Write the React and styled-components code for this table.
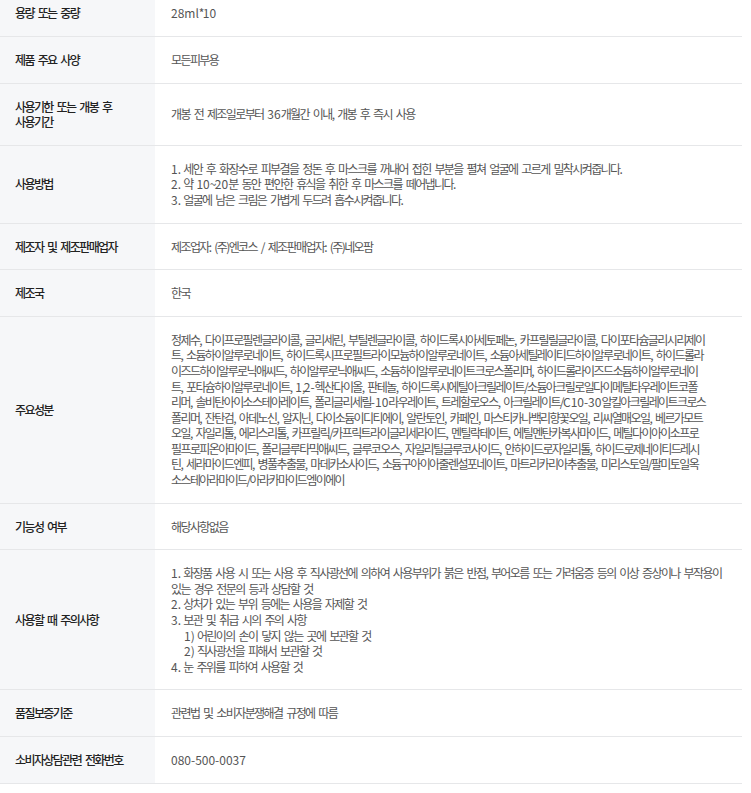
import styled, { createGlobalStyle } from 'styled-components'

const GlobalStyle = createGlobalStyle`
  body {
    margin: 0;
    background: #fff;
    font-family: "Noto Sans CJK KR", "Noto Sans", sans-serif;
  }
`

const Table = styled.div`
  width: 742px;
  font-size: 12px;
  line-height: 15.6px;
  letter-spacing: -1.6px;
  word-spacing: 2.7px;
`

const Row = styled.div`
  display: grid;
  grid-template-columns: 155px 1fr;
  border-bottom: 1px solid #e6e7e9;
`

const Label = styled.div`
  display: flex;
  align-items: center;
  background: #f6f7f9;
  padding: ${props => props.$first ? '5.4px' : '15px'} 15px 15px;
  color: #222;
  font-weight: 500;
`

const Value = styled.div`
  display: flex;
  flex-direction: column;
  justify-content: center;
  padding: ${props => props.$first ? '5.4px' : '15px'} 16px 15px;
  color: #555;
`

const Line = styled.div`
  white-space: nowrap;
  padding-left: ${props => props.$indent ? '13px' : '0'};
`

// latin letters, digits and hyphens keep their natural spacing
const Latin = styled.span`
  letter-spacing: 0;
`

function renderText(str) {
  return str.split(/([A-Za-z0-9-]+)/).map((part, i) =>
    /^[A-Za-z0-9-]+$/.test(part) ? <Latin key={i}>{part}</Latin> : part
  )
}

const usage = [
  '1. 세안 후 화장수로 피부결을 정돈 후 마스크를 꺼내어 접힌 부분을 펼쳐 얼굴에 고르게 밀착시켜줍니다.',
  '2. 약 10~20분 동안 편안한 휴식을 취한 후 마스크를 떼어냅니다.',
  '3. 얼굴에 남은 크림은 가볍게 두드려 흡수시켜줍니다.',
]

const ingredients = [
  '정제수, 다이프로필렌글라이콜, 글리세린, 부틸렌글라이콜, 하이드록시아세토페논, 카프릴릴글라이콜, 다이포타슘글리시리제이',
  '트, 소듐하이알루로네이트, 하이드록시프로필트라이모늄하이알루로네이트, 소듐아세틸레이티드하이알루로네이트, 하이드롤라',
  '이즈드하이알루로닉애씨드, 하이알루로닉애씨드, 소듐하이알루로네이트크로스폴리머, 하이드롤라이즈드소듐하이알루로네이',
  '트, 포타슘하이알루로네이트, 1,2-헥산다이올, 판테놀, 하이드록시에틸아크릴레이트/소듐아크릴로일다이메틸타우레이트코폴',
  '리머, 솔비탄아이소스테아레이트, 폴리글리세릴-10라우레이트, 트레할로오스, 아크릴레이트/C10-30알킬아크릴레이트크로스',
  '폴리머, 잔탄검, 아데노신, 알지닌, 다이소듐이디티에이, 알란토인, 카페인, 마스티카나백리향꽃오일, 리씨열매오일, 베르가모트',
  '오일, 자일리톨, 에리스리톨, 카프릴릭/카프릭트라이글리세라이드, 멘틸락테이트, 에틸멘탄카복사마이드, 메틸다이아이소프로',
  '필프로피온아마이드, 폴리글루타믹애씨드, 글루코오스, 자일리틸글루코사이드, 안하이드로자일리톨, 하이드로제네이티드레시',
  '틴, 세라마이드엔피, 병풀추출물, 마데카소사이드, 소듐구아이아줄렌설포네이트, 마트리카리아추출물, 미리스토일/팔미토일옥',
  '소스테아라마이드/아라카마이드엠이에이',
]

const cautions = [
  { text: '1. 화장품 사용 시 또는 사용 후 직사광선에 의하여 사용부위가 붉은 반점, 부어오름 또는 가려움증 등의 이상 증상이나 부작용이' },
  { text: '있는 경우 전문의 등과 상담할 것' },
  { text: '2. 상처가 있는 부위 등에는 사용을 자제할 것' },
  { text: '3. 보관 및 취급 시의 주의 사항' },
  { text: '1) 어린이의 손이 닿지 않는 곳에 보관할 것', indent: true },
  { text: '2) 직사광선을 피해서 보관할 것', indent: true },
  { text: '4. 눈 주위를 피하여 사용할 것' },
]

const rows = [
  { label: ['용량 또는 중량'], lines: ['28ml*10'] },
  { label: ['제품 주요 사양'], lines: ['모든피부용'] },
  { label: ['사용기한 또는 개봉 후', '사용기간'], lines: ['개봉 전 제조일로부터 36개월간 이내, 개봉 후 즉시 사용'] },
  { label: ['사용방법'], lines: usage },
  { label: ['제조자 및 제조판매업자'], lines: ['제조업자: (주)엔코스 / 제조판매업자: (주)네오팜'] },
  { label: ['제조국'], lines: ['한국'] },
  { label: ['주요성분'], lines: ingredients },
  { label: ['기능성 여부'], lines: ['해당사항없음'] },
  { label: ['사용할 때 주의사항'], lines: cautions },
  { label: ['품질보증기준'], lines: ['관련법 및 소비자분쟁해결 규정에 따름'] },
  { label: ['소비자상담관련 전화번호'], lines: ['080-500-0037'] },
]

export default function App() {
  return (
    <>
      <GlobalStyle />
      <Table>
        {rows.map((row, i) => (
          <Row key={i}>
            <Label $first={i === 0}>
              <div>
                {row.label.map((l, j) => <Line key={j}>{l}</Line>)}
              </div>
            </Label>
            <Value $first={i === 0}>
              {row.lines.map((l, j) => typeof l === 'string'
                ? <Line key={j}>{renderText(l)}</Line>
                : <Line key={j} $indent={l.indent}>{renderText(l.text)}</Line>
              )}
            </Value>
          </Row>
        ))}
      </Table>
    </>
  )
}
